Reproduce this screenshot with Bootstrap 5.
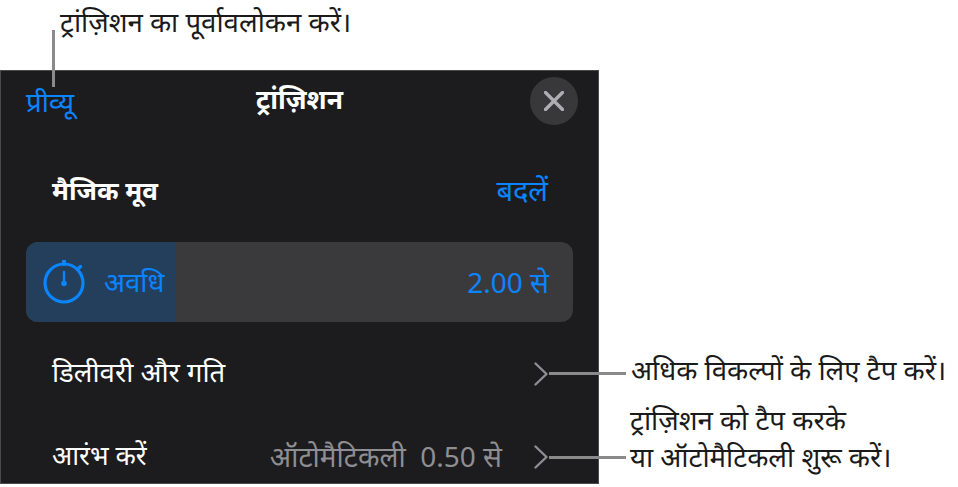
<!DOCTYPE html>
<html lang="hi">
<head>
<meta charset="utf-8">
<title>ट्रांज़िशन</title>
<link rel="stylesheet" href="https://cdn.jsdelivr.net/npm/bootstrap@5.3.0/dist/css/bootstrap.min.css">
<style>
html,body{height:487px;overflow:hidden;background:#fff}
body{font-family:"Noto Sans","Noto Sans Devanagari","Liberation Sans",sans-serif;color:#1a1a1a}
.figure-canvas{position:relative;width:958px;height:487px;overflow:hidden}
.sheet{position:absolute;left:0;top:70px;width:599px;height:414px;background:#1c1c1e;border:1px solid #4a4a4c;color:#fff;font-size:27.500px}
.sheet-head{height:60px;padding:0 20px 0 25px}
.head-preview{margin-top:2px}
.head-title{position:absolute;left:0;right:0;top:8px;text-align:center;font-weight:700;font-size:26.500px;line-height:40px}
.accent{color:#0a84ff}
.close-disc{width:48px;height:48px;border-radius:50%;background:#38383a;border:0;padding:0;margin-top:-1px}
.effect-row{height:62px;margin-top:28px;padding:0 50px 0 51px}
.effect-row b{font-weight:700;font-size:26px}
.change-link{font-size:29px}
.duration{height:80px;margin:21px 25px 0;background:#3a3a3c;border-radius:12px;overflow:hidden;padding-right:24px}
.duration-fill{width:150px;height:100%;background:#233f5c;padding-left:16px;gap:18px}
.duration-val{font-size:28px}
.list-line{padding:0 50px 0 51px;color:#fff}
.line-a{height:81px;margin-top:11px}
.line-a-label{margin-top:-3px}
.line-b{height:81px;margin-top:2px}
.start-label{font-size:26.500px;margin-top:-2px}
.muted-val{color:#8e8e93;font-size:28px;margin-top:-2px}
.note{position:absolute;font-size:27.600px;line-height:37px;color:#1a1a1a;white-space:nowrap}
.note-top{left:60px;top:3px}
.note-mid{left:631px;top:351px}
.note-low{left:630px;top:401px}
.lead-line{position:absolute;background:#8a8a8a}
.lead-top{left:52px;top:30px;width:3px;height:57px}
.lead-mid{left:549px;top:372px;width:77px;height:3px}
.lead-low{left:549px;top:456px;width:77px;height:3px}
.chev{display:block}
</style>
</head>
<body>
<div class="figure-canvas">
  <section class="sheet">
    <div class="sheet-head d-flex align-items-center justify-content-between position-relative">
      <span class="accent head-preview">प्रीव्यू</span>
      <div class="head-title">ट्रांज़िशन</div>
      <button class="close-disc d-flex align-items-center justify-content-center position-relative" aria-label="बंद करें">
        <svg width="20" height="20" viewBox="0 0 20 20"><path d="M1.500 1.500 18.500 18.500M18.500 1.500 1.500 18.500" stroke="#aeaeb2" stroke-width="3.400" stroke-linecap="round"/></svg>
      </button>
    </div>
    <div class="effect-row d-flex align-items-center justify-content-between">
      <b>मैजिक मूव</b><span class="accent change-link">बदलें</span>
    </div>
    <div class="duration d-flex align-items-center justify-content-between accent">
      <div class="duration-fill d-flex align-items-center">
        <svg width="44" height="44" viewBox="0 0 44 44" fill="none" stroke="#0a84ff"><circle cx="22" cy="23" r="19" stroke-width="3.200"/><path d="M22 12V23" stroke-width="2.400" stroke-linecap="round"/><path d="M22 1V4" stroke-width="4" stroke-linecap="round"/><path d="M36.500 8.500 38.500 6.500" stroke-width="3.400" stroke-linecap="round"/><circle cx="22" cy="23.500" r="2.800" fill="#0a84ff" stroke="none"/></svg>
        <span>अवधि</span>
      </div>
      <span class="duration-val">2.00 से</span>
    </div>
    <div class="list-line line-a d-flex align-items-center justify-content-between">
      <span class="line-a-label">डिलीवरी और गति</span>
      <svg class="chev" width="14" height="24" viewBox="0 0 14 24" fill="none"><path d="M1.500 1.500 12.500 12 1.500 22.500" stroke="#8e8e93" stroke-width="2.400" stroke-linecap="round" stroke-linejoin="round"/></svg>
    </div>
    <div class="list-line line-b d-flex align-items-center">
      <span class="start-label">आरंभ करें</span>
      <span class="muted-val ms-auto me-4">ऑटोमैटिकली&nbsp; 0.50 से</span>
      <svg class="chev ms-2" width="14" height="24" viewBox="0 0 14 24" fill="none"><path d="M1.500 1.500 12.500 12 1.500 22.500" stroke="#8e8e93" stroke-width="2.400" stroke-linecap="round" stroke-linejoin="round"/></svg>
    </div>
  </section>

  <div class="lead-line lead-top"></div>
  <div class="lead-line lead-mid"></div>
  <div class="lead-line lead-low"></div>
  <div class="note note-top">ट्रांज़िशन का पूर्वावलोकन करें।</div>
  <div class="note note-mid">अधिक विकल्पों के लिए टैप करें।</div>
  <div class="note note-low">ट्रांज़िशन को टैप करके<br>या ऑटोमैटिकली शुरू करें।</div>
</div>
<script src="https://cdn.jsdelivr.net/npm/bootstrap@5.3.0/dist/js/bootstrap.bundle.min.js"></script>
</body>
</html>
